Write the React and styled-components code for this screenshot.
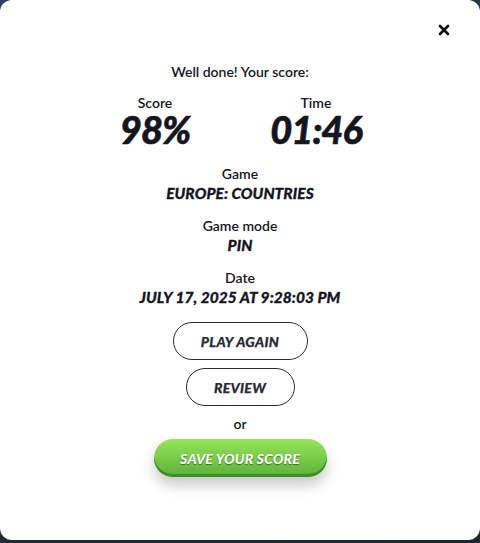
import React from "react";
import styled, { createGlobalStyle } from "styled-components";

const Global = createGlobalStyle`
  html, body { margin: 0; padding: 0; }
  body {
    background: linear-gradient(160deg, #31425a 0%, #272d3a 40%, #22262f 100%);
    font-family: Lato, "Open Sans", sans-serif;
    color: #15151f;
    height: 543px;
    overflow: hidden;
  }
`;

const Modal = styled.div`
  position: relative;
  box-sizing: border-box;
  width: 480px;
  height: 540px;
  background: #ffffff;
  border-radius: 12px;
  padding-top: 62px;
  display: flex;
  flex-direction: column;
  align-items: center;
`;

const Close = styled.button`
  position: absolute;
  top: 24px;
  right: 30px;
  width: 12px;
  height: 12px;
  padding: 0;
  border: none;
  background: none;
  cursor: pointer;
  display: flex;
`;

const Title = styled.div`
  font-size: 14px;
  font-weight: 600;
  line-height: 20px;
`;

const ScoreRow = styled.div`
  display: grid;
  grid-template-columns: 120px 120px;
  column-gap: 41px;
  margin-top: 11px;
  padding-right: 9px;
`;

const Stat = styled.div`
  display: flex;
  flex-direction: column;
  align-items: center;
`;

const Label = styled.div`
  font-size: 14px;
  font-weight: 600;
  line-height: 20px;
`;

const BigValue = styled.div`
  font-size: 38px;
  font-weight: 900;
  font-style: italic;
  line-height: 32px;
  letter-spacing: -1px;
  -webkit-text-stroke: 0.6px #15151f;
`;

const Info = styled.div`
  display: flex;
  flex-direction: column;
  align-items: center;
  margin-top: ${(p) => p.$gap}px;
`;

const Value = styled.div`
  font-size: 15.5px;
  font-weight: 900;
  font-style: italic;
  line-height: 18px;
  letter-spacing: 0.05px;
  -webkit-text-stroke: 0.3px #15151f;
  text-transform: uppercase;
`;

const Outline = styled.button`
  box-sizing: border-box;
  width: ${(p) => p.$w}px;
  height: 38px;
  margin-top: ${(p) => p.$gap}px;
  border: 1.3px solid #2a2a36;
  border-radius: 19px;
  background: #fff;
  font-family: Lato, sans-serif;
  font-size: 14px;
  font-weight: 900;
  font-style: italic;
  letter-spacing: 0.3px;
  -webkit-text-stroke: 0.25px #2a2a38;
  color: #2a2a38;
  text-transform: uppercase;
  cursor: pointer;
`;

const Or = styled.div`
  font-size: 14px;
  font-weight: 600;
  line-height: 20px;
  margin-top: 8px;
`;

const Save = styled.button`
  box-sizing: border-box;
  width: 173px;
  height: 38px;
  margin-top: 5px;
  border: none;
  border-radius: 19px;
  background: linear-gradient(180deg, #96e45a 0%, #78cc48 50%, #5cb03a 100%);
  box-shadow: inset 0 -3px 0 #3f8d2c, 0 8px 14px rgba(0, 0, 0, 0.22);
  font-family: Lato, sans-serif;
  font-size: 14px;
  font-weight: 900;
  font-style: italic;
  letter-spacing: 0.2px;
  color: #fff;
  text-shadow: 0 1px 1px rgba(0, 0, 0, 0.45);
  text-transform: uppercase;
  cursor: pointer;
`;

export default function App() {
  return (
    <>
      <Global />
      <Modal>
        <Close aria-label="close">
          <svg width="12" height="12" viewBox="0 0 12 12">
            <path d="M2 2 L10 10 M10 2 L2 10" stroke="#111" strokeWidth="2.6" strokeLinecap="round" />
          </svg>
        </Close>
        <Title>Well done! Your score:</Title>
        <ScoreRow>
          <Stat>
            <Label>Score</Label>
            <BigValue>98%</BigValue>
          </Stat>
          <Stat>
            <Label>Time</Label>
            <BigValue>01:46</BigValue>
          </Stat>
        </ScoreRow>
        <Info $gap={19}>
          <Label>Game</Label>
          <Value>Europe: Countries</Value>
        </Info>
        <Info $gap={14}>
          <Label>Game mode</Label>
          <Value>Pin</Value>
        </Info>
        <Info $gap={14}>
          <Label>Date</Label>
          <Value>July 17, 2025 at 9:28:03 PM</Value>
        </Info>
        <Outline $w={135} $gap={16}>Play again</Outline>
        <Outline $w={109} $gap={8}>Review</Outline>
        <Or>or</Or>
        <Save>Save your score</Save>
      </Modal>
    </>
  );
}
